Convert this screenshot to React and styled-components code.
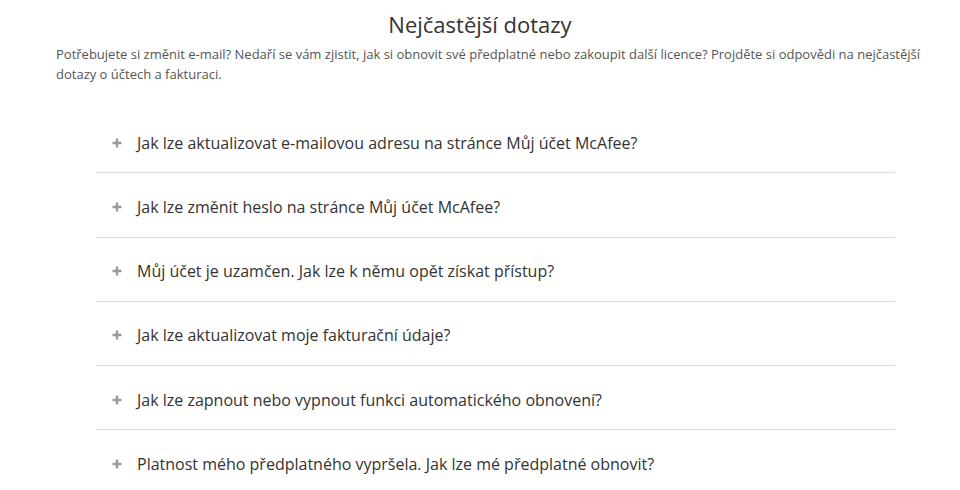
import React from "react";
import styled, { createGlobalStyle } from "styled-components";

const Global = createGlobalStyle`
  body {
    margin: 0;
    background: #fff;
    font-family: "Open Sans", "Noto Sans", sans-serif;
  }
`;

const questions = [
  "Jak lze aktualizovat e-mailovou adresu na stránce Můj účet McAfee?",
  "Jak lze změnit heslo na stránce Můj účet McAfee?",
  "Můj účet je uzamčen. Jak lze k němu opět získat přístup?",
  "Jak lze aktualizovat moje fakturační údaje?",
  "Jak lze zapnout nebo vypnout funkci automatického obnovení?",
  "Platnost mého předplatného vypršela. Jak lze mé předplatné obnovit?",
];

const PlusIcon = () => (
  <svg width="10" height="10" viewBox="0 0 10 10">
    <path d="M5 0.5v9M0.5 5h9" stroke="#9a9a9a" strokeWidth="2.4" />
  </svg>
);

const App = () => {
  return (
    <Page>
      <Global />
      <Title>Nejčastější dotazy</Title>
      <Intro>
        Potřebujete si změnit e-mail? Nedaří se vám zjistit, jak si obnovit své
        předplatné nebo zakoupit další licence? Projděte si odpovědi na
        nejčastější dotazy o účtech a fakturaci.
      </Intro>
      <List>
        {questions.map((q, i) => (
          <Item key={i} $last={i === questions.length - 1}>
            <Plus>
              <PlusIcon />
            </Plus>
            <Question>{q}</Question>
          </Item>
        ))}
      </List>
    </Page>
  );
};

export default App;

const Page = styled.div`
  width: 960px;
  padding-top: 8px;
`;

const Title = styled.h1`
  margin: 0;
  text-align: center;
  font-size: 22px;
  font-weight: 400;
  line-height: 32px;
  color: #333;
`;

const Intro = styled.p`
  margin: 4px 0 0 56px;
  width: 865px;
  font-size: 13px;
  line-height: 20px;
  color: #555;
`;

const List = styled.div`
  margin: 25px 0 0 96px;
  width: 799px;
`;

const Item = styled.div`
  display: flex;
  align-items: center;
  height: 64.25px;
  padding: 4px 0 0 16px;
  box-sizing: border-box;
  border-bottom: ${(p) => (p.$last ? "none" : "1px solid #dcdcdc")};
`;

const Plus = styled.span`
  display: flex;
  align-items: center;
  width: 25px;
  height: 10px;
`;

const Question = styled.span`
  font-size: 16px;
  color: #333;
`;
